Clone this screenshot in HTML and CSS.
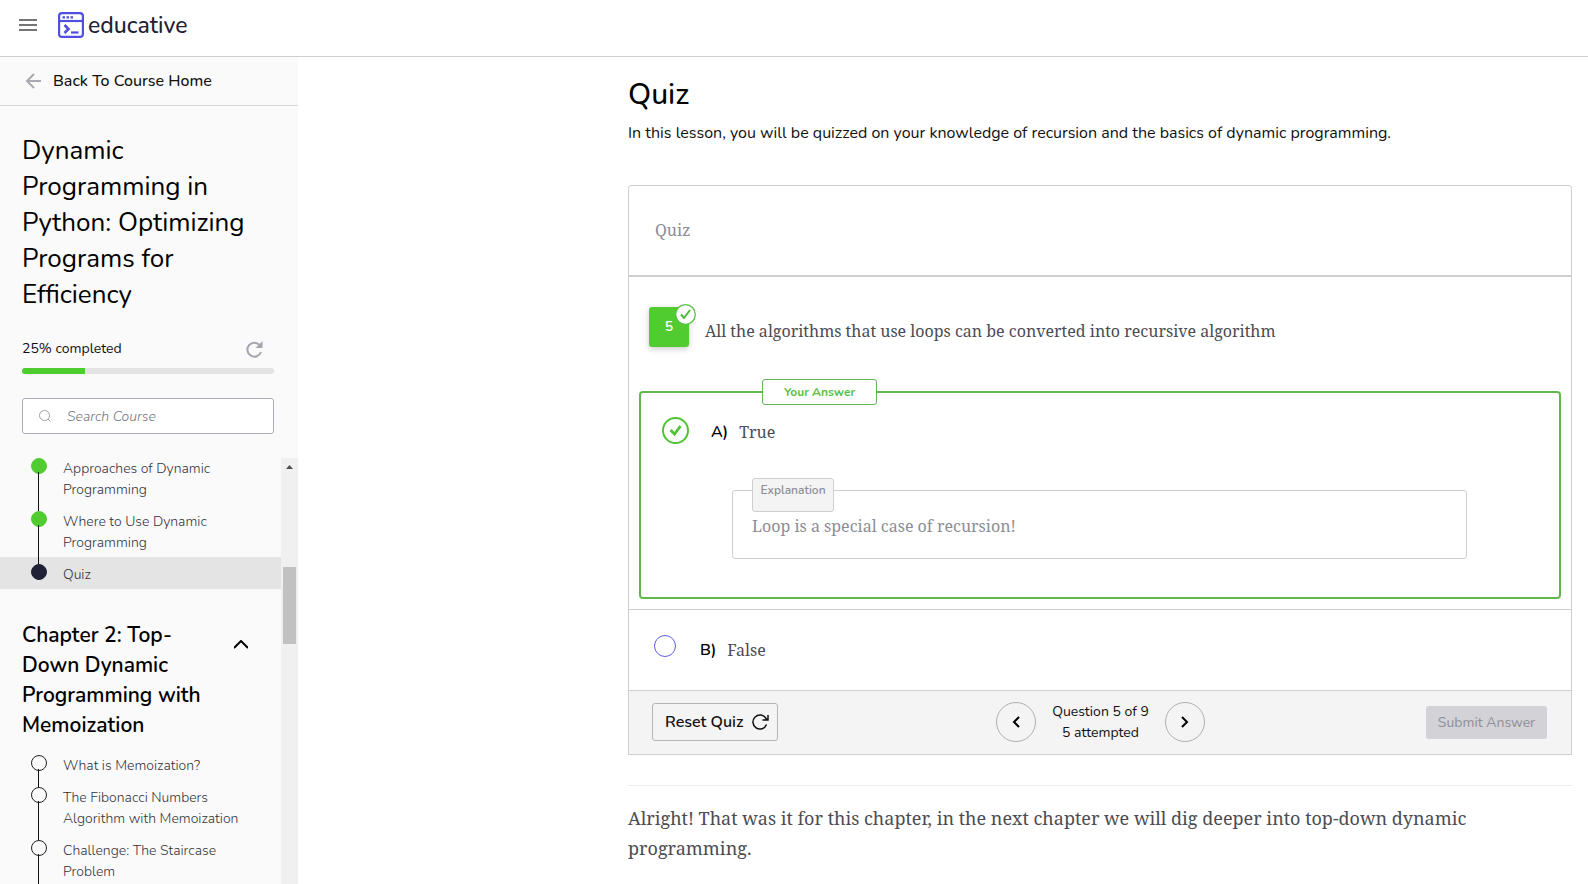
FILE: index.html
```html
<!DOCTYPE html>
<html lang="en">
<head>
<meta charset="utf-8">
<meta name="viewport" content="width=device-width, initial-scale=1">
<title>Quiz - Dynamic Programming in Python</title>
<link rel="stylesheet" href="styles.css">
</head>
<body>
<header class="topbar">
  <button class="icon-button" type="button" aria-label="Menu">
    <svg width="18" height="12" viewBox="0 0 18 12" fill="#757575"><path d="M0 0h18v2H0zM0 5h18v2H0zM0 10h18v2H0z"/></svg>
  </button>
  <a class="logo" href="#">
    <svg width="26" height="26" viewBox="0 0 26 26" fill="none" stroke="#4f4fe0" stroke-width="2.200"><rect x="1.100" y="1.100" width="23.800" height="23.800" rx="3"/><path d="M1 9h24"/><path d="M6.500 13l4 4-4 4" stroke-width="2.600"/><path d="M13 20.500h7.500" stroke-width="2.200"/><path d="M4.500 5.300h2.500M8.500 5.300h2.500M12.500 5.300h2.500"/></svg>
    <span>educative</span>
  </a>
</header>
<div class="layout">
  <aside class="sidebar">
    <a class="back" href="#">
      <svg width="16" height="16" viewBox="0 0 16 16" fill="none" stroke="#a9a9b0" stroke-width="2"><path d="M16 8H2M9 1L2 8l7 7"/></svg>
      <span>Back To Course Home</span>
    </a>
    <div class="course">
      <h2 class="course-title">Dynamic Programming in Python: Optimizing Programs for Efficiency</h2>
      <div class="progress-row">
        <span id="progress-label">25% completed</span>
        <button class="icon-button" type="button" aria-label="Reset progress">
          <svg width="17" height="17" viewBox="0 0 17 17"><path d="M14 4.500A7 7 0 1 0 15 11" fill="none" stroke="#a5a5ad" stroke-width="2"/><path d="M16.500 0v7h-7z" fill="#a5a5ad"/></svg>
        </button>
      </div>
      <div class="progress" role="progressbar" aria-labelledby="progress-label" aria-valuenow="25"><div class="progress-fill" style="width:25%"></div></div>
      <label class="search">
        <svg width="12" height="12" viewBox="0 0 12 12" fill="none" stroke="#a0a0a8"><circle cx="5.500" cy="5.500" r="5"/><path d="M9 9l2.500 2.500"/></svg>
        <input type="search" placeholder="Search Course" aria-label="Search Course">
      </label>
    </div>
    <div class="toc-wrap">
      <nav class="toc">
        <ul class="lessons first">
          <li class="done"><a href="#">Approaches of Dynamic Programming</a></li>
          <li class="done"><a href="#">Where to Use Dynamic Programming</a></li>
          <li class="current"><a href="#">Quiz</a></li>
        </ul>
        <div class="chapter">
          <h3>Chapter 2: Top-Down Dynamic Programming with Memoization</h3>
          <button class="icon-button" type="button" aria-label="Collapse chapter">
            <svg width="14" height="9" viewBox="0 0 14 9" fill="none" stroke="#000" stroke-width="2"><path d="M0 8l7-7 7 7"/></svg>
          </button>
        </div>
        <ul class="lessons open">
          <li><a href="#">What is Memoization?</a></li>
          <li><a href="#">The Fibonacci Numbers Algorithm with Memoization</a></li>
          <li><a href="#">Challenge: The Staircase Problem</a></li>
        </ul>
      </nav>
      <div class="scrollbar">
        <svg width="7" height="4" viewBox="0 0 7 4" fill="#505050"><path d="M3.500 0L7 4H0z"/></svg>
        <div class="thumb"></div>
      </div>
    </div>
  </aside>
  <main class="content">
    <h1>Quiz</h1>
    <p class="intro">In this lesson, you will be quizzed on your knowledge of recursion and the basics of dynamic programming.</p>
    <section class="quiz">
      <div class="quiz-head">Quiz</div>
      <div class="question">
        <div class="number">5
          <svg class="badge" width="21" height="21" viewBox="0 0 21 21" fill="none"><circle cx="10.500" cy="10.500" r="9.800" fill="#fff" stroke="#58c142" stroke-width="1.300"/><path d="M6 10.500l3 3.500L15 6" stroke="#4fb83b" stroke-width="2"/></svg>
        </div>
        <p>All the algorithms that use loops can be converted into recursive algorithm</p>
      </div>
      <div class="answer chosen">
        <span class="tag">Your Answer</span>
        <label class="choice">
          <input class="radio" type="radio" name="answer" checked>
          <svg class="tick" width="27" height="27" viewBox="0 0 27 27" fill="none" stroke="#4dc432"><circle cx="13.500" cy="13.500" r="12.500" stroke-width="2"/><path d="M8.500 13l4 4 6-8" stroke-width="2.800"/></svg>
          <span class="letter">A)</span><span class="text">True</span>
        </label>
        <div class="explanation">
          <span class="explanation-tag">Explanation</span>
          <p>Loop is a special case of recursion!</p>
        </div>
      </div>
      <div class="answer plain">
        <label class="choice">
          <input class="radio" type="radio" name="answer">
          <span class="letter">B)</span><span class="text">False</span>
        </label>
      </div>
      <div class="quiz-foot">
        <div class="foot-side">
          <button class="reset" type="button">Reset Quiz
            <svg width="17" height="16" viewBox="0 0 17 16" fill="none" stroke="#111" stroke-width="1.500"><path d="M14.500 10.500A7 7 0 1 1 14 4.500L15.500 6M16 1v5h-5.500"/></svg>
          </button>
        </div>
        <div class="pager">
          <button class="round" type="button" aria-label="Previous question"><svg width="8" height="12" viewBox="0 0 8 12" fill="none" stroke="#000" stroke-width="2"><path d="M7 1L2 6l5 5"/></svg></button>
          <p>Question 5 of 9<br>5 attempted</p>
          <button class="round" type="button" aria-label="Next question"><svg width="8" height="12" viewBox="0 0 8 12" fill="none" stroke="#000" stroke-width="2"><path d="M1 1l5 5-5 5"/></svg></button>
        </div>
        <div class="foot-side end"><button class="submit" type="button" disabled>Submit Answer</button></div>
      </div>
    </section>
    <hr>
    <p class="outro">Alright! That was it for this chapter, in the next chapter we will dig deeper into top-down dynamic programming.</p>
  </main>
</div>
</body>
</html>
```

FILE: styles.css
```css
* { box-sizing: border-box; }
body {
  margin: 0;
  height: 100vh;
  display: flex;
  flex-direction: column;
  overflow: hidden;
  background: #fff;
  color: #111;
  font-family: Nunito, Lato, "Open Sans", sans-serif;
  font-size: 14px;
}
h1, h2, h3, p, ul { margin: 0; padding: 0; }
ul { list-style: none; }
a { color: inherit; text-decoration: none; }
button, input { font: inherit; margin: 0; }
svg { display: block; flex: none; }
.icon-button { border: 0; padding: 0; background: none; }

.topbar {
  flex: none;
  height: 57px;
  display: flex;
  align-items: center;
  gap: 21px;
  padding: 0 19px 6px;
  border-bottom: 1px solid #d0d0d2;
}
.logo {
  display: flex;
  align-items: center;
  gap: 4px;
  font-size: 23px;
  font-weight: 500;
  line-height: 28px;
  color: #1f2033;
}
.logo span { padding-top: 2px; }
.layout { flex: 1; min-height: 0; display: flex; }

.sidebar {
  flex: none;
  width: 298px;
  display: flex;
  flex-direction: column;
  background: #fafafa;
}
.back {
  display: flex;
  align-items: center;
  gap: 12px;
  height: 49px;
  padding: 0 25px;
  border-bottom: 1px solid #d6d6d8;
  font-size: 16px;
  font-weight: 500;
}
.course { padding: 27px 24px 24px 22px; }
.course-title {
  font-size: 26px;
  font-weight: 400;
  line-height: 36px;
  color: #000;
}
.progress-row {
  display: flex;
  justify-content: space-between;
  align-items: center;
  padding-right: 11px;
  margin-top: 24px;
  line-height: 24px;
}
.progress {
  height: 6px;
  margin-top: 7px;
  border-radius: 3px;
  overflow: hidden;
  background: #e3e3e3;
}
.progress-fill { height: 100%; background: #50cc30; }
.search {
  display: flex;
  align-items: center;
  gap: 16px;
  height: 36px;
  margin-top: 24px;
  padding: 0 16px;
  border: 1px solid #adadb5;
  border-radius: 3px;
  background: #fff;
}
.search input {
  flex: 1;
  min-width: 0;
  border: 0;
  padding: 0;
  outline: 0;
  background: none;
  font-weight: 300;
}
.search input::placeholder { color: #75757a; font-style: italic; opacity: 1; }
.toc-wrap { flex: 1; min-height: 0; display: flex; }
.toc { flex: 1; overflow: hidden; }
.scrollbar {
  width: 17px;
  display: flex;
  flex-direction: column;
  align-items: center;
  padding-top: 7px;
  background: #f0f0f0;
}
.thumb { width: 13px; height: 77px; margin-top: 98px; background: #c1c1c1; }
.lessons li {
  position: relative;
  padding: 7px 34px 4px 63px;
  line-height: 21px;
  font-weight: 300;
  color: #33333a;
}
.lessons.first li:first-child { padding-top: 0; }
.lessons li::before {
  content: "";
  position: absolute;
  z-index: 1;
  left: 31px;
  top: 7px;
  width: 14px;
  height: 14px;
  border: 1px solid #222;
  border-radius: 50%;
  background: #fafafa;
}
.lessons li::after {
  content: "";
  position: absolute;
  z-index: 1;
  left: 38px;
  top: 21px;
  bottom: -7px;
  width: 1px;
  background: #111;
}
.lessons.first li:first-child::before { top: 0; }
.lessons.first li:first-child::after { top: 14px; }
.lessons li.done::before { background: #50cc30; border-color: #50cc30; }
.lessons li.current { background: #e4e4e4; }
.lessons li.current::before { background: #202136; border-color: #202136; }
.lessons li.current::after { display: none; }
.chapter {
  display: flex;
  justify-content: space-between;
  align-items: flex-start;
  padding: 31px 33px 8px 22px;
}
.chapter h3 { width: 186px; font-size: 21px; font-weight: 600; line-height: 30px; color: #000; }
.chapter .icon-button { padding-top: 20px; }

.content { flex: 1; min-width: 0; padding: 18px 16px 0 330px; }
h1 { font-size: 30px; font-weight: 500; line-height: 40px; color: #000; }
.intro { margin-top: 6px; font-size: 16px; line-height: 24px; }
.quiz {
  margin-top: 40px;
  border: 1px solid #cfcfd1;
  border-radius: 3px 3px 0 0;
  font-family: "Noto Serif", "Liberation Serif", serif;
  font-size: 16px;
  color: #4c4c52;
}
.quiz-head {
  padding: 32px 26px;
  line-height: 25px;
  border-bottom: 2px solid #cfcfd1;
  color: #8d8d96;
}
.question { display: flex; gap: 16px; padding: 30px 20px 44px; }
.question p { padding-top: 12px; line-height: 24px; }
.number {
  position: relative;
  width: 40px;
  height: 40px;
  border-radius: 3px;
  background: #50cc30;
  box-shadow: 0 2px 6px rgba(0, 0, 0, .2);
  color: #fff;
  font: 600 14px/39px Nunito, Lato, sans-serif;
  text-align: center;
}
.badge { position: absolute; top: -3px; right: -7px; }
.answer.chosen {
  position: relative;
  margin: 0 10px;
  padding: 24px 92px 38px 21px;
  border: 2px solid #62b850;
  border-radius: 4px;
}
.tag {
  position: absolute;
  top: -14px;
  left: 121px;
  width: 115px;
  border: 1px solid #62b850;
  border-radius: 3px;
  background: #fff;
  color: #58c142;
  font: 700 12px/24px Nunito, Lato, sans-serif;
  text-align: center;
}
.choice { display: flex; line-height: 30px; }
.radio {
  appearance: none;
  width: 22px;
  height: 22px;
  border: 1px solid #5f5fe0;
  border-radius: 50%;
  background: #fff;
}
.radio:checked { width: 0; height: 0; border: 0; }
.letter { margin-left: 22px; color: #000; font: 600 16px/30px Nunito, Lato, sans-serif; }
.plain .letter { margin-left: 24px; }
.text { margin-left: 11px; }
.explanation {
  position: relative;
  margin: 43px 0 0 70px;
  padding: 22px 19px 19px;
  border: 1px solid #cfcfd1;
  border-radius: 3px;
  line-height: 26px;
  color: #8d8d96;
}
.explanation-tag {
  position: absolute;
  top: -13px;
  left: 19px;
  width: 82px;
  height: 34px;
  border: 1px solid #cfcfd1;
  border-radius: 3px;
  background: #f4f4f4;
  font: 600 12px/22px Nunito, Lato, sans-serif;
  text-align: center;
}
.answer.plain { margin-top: 10px; padding: 25px; border-top: 1px solid #cfcfd1; }
.quiz-foot {
  display: flex;
  align-items: center;
  padding: 10px 24px 11px 23px;
  border-top: 1px solid #cfcfd1;
  background: #f4f4f4;
  font: 14px/21px Nunito, Lato, sans-serif;
  color: #111;
}
.foot-side { flex: 1; display: flex; }
.foot-side.end { justify-content: flex-end; }
.reset {
  display: flex;
  align-items: center;
  gap: 8px;
  height: 38px;
  padding: 0 8px 0 12px;
  border: 1px solid #b5b5b8;
  border-radius: 3px;
  background: #f4f4f4;
  font-size: 16px;
  font-weight: 600;
  color: #111;
}
.pager { display: flex; align-items: center; gap: 16px; padding-left: 2px; text-align: center; }
.round {
  display: grid;
  place-items: center;
  width: 40px;
  height: 40px;
  padding: 0;
  border: 1px solid #b0b0b2;
  border-radius: 50%;
  background: none;
}
.submit {
  height: 33px;
  width: 121px;
  padding: 0;
  border: 0;
  border-radius: 3px;
  background: #d2d2d7;
  color: #8f8f98;
}
hr { margin: 30px 0 0; border: 0; border-top: 1px solid #ececee; }
.outro {
  margin-top: 17px;
  font-family: "Noto Serif", "Liberation Serif", serif;
  font-size: 18px;
  line-height: 30px;
  color: #4c4c52;
}
```
